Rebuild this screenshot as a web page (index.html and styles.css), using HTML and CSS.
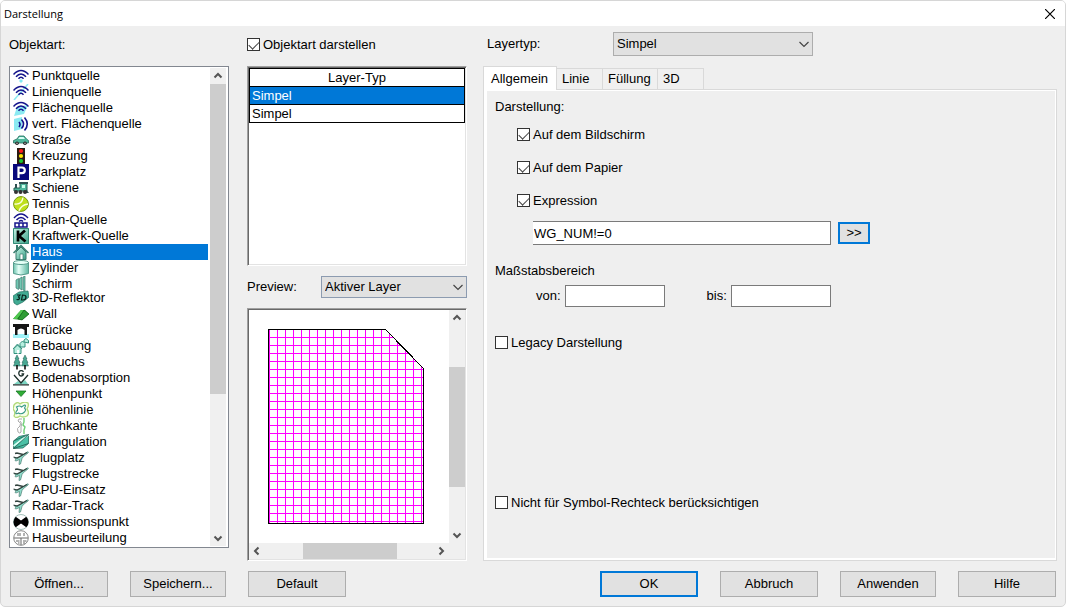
FILE: index.html
```html
<!DOCTYPE html>
<html lang="de">
<head>
<meta charset="utf-8">
<title>Darstellung</title>
<link rel="stylesheet" href="styles.css">
</head>
<body>
<svg class="defs" aria-hidden="true">
  <defs>
    <linearGradient id="mint" x1="0" y1="0" x2="1" y2="1"><stop offset="0" stop-color="#c8f5e6"/><stop offset="1" stop-color="#3aa088"/></linearGradient>
    <linearGradient id="tube" x1="0" y1="0" x2="1" y2="0"><stop offset="0" stop-color="#6cc4ae"/><stop offset=".35" stop-color="#e6fff8"/><stop offset="1" stop-color="#5fb8a2"/></linearGradient>
    <g id="waves" fill="none" stroke="#14148c" stroke-width="1.5"><path d="M.5 6.500Q8-1.500 15.500 6.500M3 8.800Q8 3 13 8.800M5.500 10.800Q8 7.500 10.500 10.800"/></g>
    <symbol id="i-punkt" viewBox="0 0 16 16"><use href="#waves"/><path d="M8 11l2 2-2 2-2-2z" fill="#7fe9f2"/></symbol>
    <symbol id="i-linie" viewBox="0 0 16 16"><path d="M1 16L15 0" stroke="#8beaf2" stroke-width="1.500"/><use href="#waves"/></symbol>
    <symbol id="i-flaeche" viewBox="0 0 16 16"><path d="M4 7l11-2-4 9-10 2z" fill="#8beaf2"/><use href="#waves"/></symbol>
    <symbol id="i-vert" viewBox="0 0 16 16"><path d="M1 3l8-2v12l-8 2z" fill="#8beaf2"/><path d="M6 6q2 2.500 0 5M8.500 3.500q4 4.500 0 9M11.500 1.500q5.500 6.500 0 13" fill="none" stroke="#14148c" stroke-width="1.600"/></symbol>
    <symbol id="i-auto" viewBox="0 0 16 16"><path d="M.5 8.500L4 7l2-3h5l2.500 3 2 1.500V11H.5z" fill="#4fb79c" stroke="#276f60" stroke-width=".8"/><path d="M5 7l1.500-2h4L12 7z" fill="#d8fff5"/><circle cx="4" cy="11.300" r="1.800" fill="#222"/><circle cx="12" cy="11.300" r="1.800" fill="#222"/><circle cx="4" cy="11.300" r=".7" fill="#ddd"/><circle cx="12" cy="11.300" r=".7" fill="#ddd"/></symbol>
    <symbol id="i-ampel" viewBox="0 0 16 16"><path d="M4 0h8v16H4z" fill="#2b1a10"/><circle cx="8" cy="3" r="2.100" fill="#ff1a1a"/><circle cx="8" cy="8" r="2.100" fill="#ffe600"/><circle cx="8" cy="13" r="2.100" fill="#19c832"/></symbol>
    <symbol id="i-park" viewBox="0 0 16 16"><path d="M0 0h16v16H0z" fill="#08087c"/><path d="M5.500 14V3.500H9a2.700 2.700 0 010 5.600H5.500" fill="none" stroke="#fff" stroke-width="2.200"/></symbol>
    <symbol id="i-lok" viewBox="0 0 16 16"><path d="M1 11V8h6V3h6l1 1v7z" fill="#4fb79c" stroke="#245f54"/><path d="M2 4h2v4H2zM6 2h9v2H6zM13 9l3 4h-3z" fill="#2d5050"/><path d="M9 5h3v3H9z" fill="#caffed"/><circle cx="3" cy="12" r="2" fill="#333"/><circle cx="7.500" cy="12" r="2" fill="#333"/><circle cx="12" cy="12" r="2" fill="#333"/></symbol>
    <symbol id="i-tennis" viewBox="0 0 16 16"><circle cx="8" cy="8" r="7.400" fill="#bfe01c" stroke="#759c10"/><path d="M1.500 8Q9 9 10 1.500M6 15Q8 9 15 8" fill="none" stroke="#fbffe0" stroke-width="1.400"/></symbol>
    <symbol id="i-bplan" viewBox="0 0 16 16"><path d="M1 6q7-8 14 0M3.500 8q4.500-5 9 0M6 9.500q2-2 4 0M2 15v-4h12v4zM6 11v4M10 11v4" fill="none" stroke="#14148c" stroke-width="1.500"/></symbol>
    <symbol id="i-kraft" viewBox="0 0 16 16"><path d="M0 0h16v16H0z" fill="url(#mint)"/><path d="M.5.5h15v15H.5z" fill="none" stroke="#338a77"/><path d="M5 2.500v11M12 2.500L6 8l6.500 5.500" fill="none" stroke="#000" stroke-width="2.700"/></symbol>
    <symbol id="i-haus" viewBox="0 0 16 16"><path d="M3 8v7.500h10V8L8 3z" fill="url(#mint)" stroke="#38796c"/><path d="M3 1h2v5H3z" fill="#38796c"/><path d="M.5 9L8 1.500 15.500 9" fill="none" stroke="#347c6c" stroke-width="1.500"/><path d="M7 10h3v5.500H7z" fill="#fff" stroke="#38796c" stroke-width=".7"/></symbol>
    <symbol id="i-zyl" viewBox="0 0 16 16"><path d="M.5 2.500v11q7.500 3 15 0v-11z" fill="url(#tube)" stroke="#579c8d"/><ellipse cx="8" cy="2.500" rx="7.500" ry="2" fill="#e5fff7" stroke="#579c8d"/></symbol>
    <symbol id="i-schirm" viewBox="0 0 16 16"><path d="M3 4l2.500-1.500v11L3 12zM6.500 2.500L9 1v13l-2.500-1.500zM10 1l2-1v15l-2-1z" fill="#72c8b4" stroke="#3c7b6e" stroke-width=".7"/></symbol>
    <symbol id="i-3d" viewBox="0 0 16 16"><path d="M0 6l6-4 9-1 1 6-6 5-6 3-3-2z" fill="#41ab93" stroke="#247061" stroke-width=".7"/><path d="M4 5h3L5.500 7l1 1q0 2-3 1.500M9.500 5l-1 5h1.500q3 0 3-3 0-2-3.500-2z" fill="none" stroke="#07211c" stroke-width="1.200"/></symbol>
    <symbol id="i-wall" viewBox="0 0 16 16"><path d="M0 13l8-9h4l4 4-7 6z" fill="#238a2c"/><path d="M0 13l8-9h3l-7 9z" fill="#51c850"/><path d="M11 4l5 4-7 6-4-1z" fill="#2f9c35" stroke="#125d1a" stroke-width=".6"/></symbol>
    <symbol id="i-bruecke" viewBox="0 0 16 16"><path d="M0 12h16v4H0z" fill="#a0f2f8"/><path d="M0 2h16v3h-2v8h-2.500V8q-3.500-3-7 0v5H2V5H0z" fill="#151515"/></symbol>
    <symbol id="i-bebau" viewBox="0 0 16 16"><path d="M1 15.500v-5L4.500 7 8 10.500v5zM7 9V5.500L9.500 3 12 5.500V9zM11 4V2l2-1.500 2.500 2V5z" fill="#b8efdf" stroke="#32917d"/><path d="M0 11l4.500-5L9 11" fill="none" stroke="#32917d"/><path d="M4 12h2v3.500H4z" fill="#fff"/></symbol>
    <symbol id="i-bewuchs" viewBox="0 0 16 16"><path d="M4 1l2 4H5l2 3.500H6L7.500 12h-7l1.500-3.500H1L3 5H2zM12 1l2 4h-1l2 3.500h-1l1.500 3.500h-7l1.500-3.500H9L11 5h-1z" fill="#4aa893" stroke="#225c50" stroke-width=".5"/><path d="M4 11v4.500M12 11v4.500" stroke="#111" stroke-width="1.600"/></symbol>
    <symbol id="i-boden" viewBox="0 0 16 16"><path d="M1 14l4-3 3 2 4-3 3 4z" fill="#7bd5c2"/><path d="M10.500 1.800Q9.500.5 8 .7 5.700 1 5.800 3.500 6 6 8.300 6q2 0 2.300-2H8.500M1 5l7 8 7-8M0 14.800h16" fill="none" stroke="#1d2f2b" stroke-width="1.300"/></symbol>
    <symbol id="i-hpunkt" viewBox="0 0 16 16"><path d="M3 5h10l-5 5.500z" fill="#30ad35" stroke="#167325" stroke-width=".8"/></symbol>
    <symbol id="i-hlinie" viewBox="0 0 16 16"><path d="M1 3Q4-1 7 2q4-3 8-1 1 3-1 6 3 4 0 7-4 2-7 0-4 3-6 0 2-4-1-7z" fill="#f7ffe8" stroke="#b1d978" stroke-width="1.300"/><path d="M3.500 5q3-2 5 0l3-2q2 0 0 3 2 2 0 4-3 3-6 1-4 2-2-2 2-1 0-4z" fill="#fff" stroke="#3a9a88" stroke-width="1.100"/></symbol>
    <symbol id="i-bruch" viewBox="0 0 16 16"><path d="M9 1Q5 0 5 3q4 2 2 5-4 2-2 6 2 2 3 0V9M7 3q3 2 1 6" fill="none" stroke="#aaa"/><path d="M11 0v4l-1 3 2 2-1 3v4" fill="none" stroke="#6fd077" stroke-width="1.400"/></symbol>
    <symbol id="i-tri" viewBox="0 0 16 16"><path d="M.5 7L6 2.500 15.500.5v9L10 14l-9.500.5z" fill="#4ac0a5" stroke="#276d60" stroke-width=".8"/><path d="M15.500.5L.5 12" stroke="#d9fff3" stroke-width="1.600"/><path d="M.5 7l15-6.500L.5 14.500l15-5" fill="none" stroke="#205d51" stroke-width=".8"/></symbol>
    <symbol id="i-flug" viewBox="0 0 16 16"><path d="M1 7.500l4 .5L14.500 1.800q1.500 0 .5 1.200L10.500 6.500l-1.500 2L7.500 14 6 14.500l.5-5L3 11l-1-.5 1-1.500z" fill="#8fdccb" stroke="#4a7d71" stroke-width=".7"/><path d="M2 3.500l2-.5 6 1.500M.5 7l3.500 1 10-5.500" fill="none" stroke="#33443f" stroke-width="1.300"/></symbol>
    <symbol id="i-immi" viewBox="0 0 16 16"><circle cx="8" cy="8" r="7.500" fill="#fff" stroke="#7ca69d" stroke-width=".7"/><path d="M2.700 2.700L8 6.500l5.300-3.800q4.500 5.300 0 10.600L8 9.500l-5.300 3.800q-4.500-5.300 0-10.600z" fill="#000"/></symbol>
    <symbol id="i-hausb" viewBox="0 0 16 16"><circle cx="8" cy="8" r="7.300" fill="#fff" stroke="#888"/><path d="M1 8h14M8 8v7M5 3v3M7 3v3M11 3v3M3 11h3.500M10 11h3.500M5 13h1.500M10 13h2" stroke="#666"/></symbol>
    <symbol id="chev" viewBox="0 0 10 10"><path d="M1.500 6.500L5 3l3.500 3.500" fill="none" stroke="#555" stroke-width="2"/></symbol>
    <symbol id="chev-thin" viewBox="0 0 10 10"><path d="M.5 7L5 2.500 9.500 7" fill="none" stroke="#444" stroke-width="1.200"/></symbol>
    <pattern id="hatch" x="4" y="3" width="8" height="8" patternUnits="userSpaceOnUse"><path d="M0 0h8v1H1v7H0z" fill="#f0f"/></pattern>
  </defs>
</svg>

<div class="window">
  <header class="titlebar">
    <h1 class="title">Darstellung</h1>
    <button class="close" type="button" aria-label="Schließen"><svg width="10" height="10" viewBox="0 0 10 10"><path d="M0 0l10 10M10 0L0 10" stroke="#000" stroke-width="1.200"/></svg></button>
  </header>

  <main class="columns">
    <section class="col col-types">
      <div class="head" id="types-label">Objektart:</div>
      <div class="listbox">
        <ul class="items" role="listbox" aria-labelledby="types-label">
          <li class="item" role="option"><svg class="ico"><use href="#i-punkt"/></svg><span class="name">Punktquelle</span></li>
          <li class="item" role="option"><svg class="ico"><use href="#i-linie"/></svg><span class="name">Linienquelle</span></li>
          <li class="item" role="option"><svg class="ico"><use href="#i-flaeche"/></svg><span class="name">Flächenquelle</span></li>
          <li class="item" role="option"><svg class="ico"><use href="#i-vert"/></svg><span class="name">vert. Flächenquelle</span></li>
          <li class="item" role="option"><svg class="ico"><use href="#i-auto"/></svg><span class="name">Straße</span></li>
          <li class="item" role="option"><svg class="ico"><use href="#i-ampel"/></svg><span class="name">Kreuzung</span></li>
          <li class="item" role="option"><svg class="ico"><use href="#i-park"/></svg><span class="name">Parkplatz</span></li>
          <li class="item" role="option"><svg class="ico"><use href="#i-lok"/></svg><span class="name">Schiene</span></li>
          <li class="item" role="option"><svg class="ico"><use href="#i-tennis"/></svg><span class="name">Tennis</span></li>
          <li class="item" role="option"><svg class="ico"><use href="#i-bplan"/></svg><span class="name">Bplan-Quelle</span></li>
          <li class="item" role="option"><svg class="ico"><use href="#i-kraft"/></svg><span class="name">Kraftwerk-Quelle</span></li>
          <li class="item selected" role="option" aria-selected="true"><svg class="ico"><use href="#i-haus"/></svg><span class="name">Haus</span></li>
          <li class="item" role="option"><svg class="ico"><use href="#i-zyl"/></svg><span class="name">Zylinder</span></li>
          <li class="item short" role="option"><svg class="ico"><use href="#i-schirm"/></svg><span class="name">Schirm</span></li>
          <li class="item" role="option"><svg class="ico"><use href="#i-3d"/></svg><span class="name">3D-Reflektor</span></li>
          <li class="item" role="option"><svg class="ico"><use href="#i-wall"/></svg><span class="name">Wall</span></li>
          <li class="item" role="option"><svg class="ico"><use href="#i-bruecke"/></svg><span class="name">Brücke</span></li>
          <li class="item" role="option"><svg class="ico"><use href="#i-bebau"/></svg><span class="name">Bebauung</span></li>
          <li class="item" role="option"><svg class="ico"><use href="#i-bewuchs"/></svg><span class="name">Bewuchs</span></li>
          <li class="item" role="option"><svg class="ico"><use href="#i-boden"/></svg><span class="name">Bodenabsorption</span></li>
          <li class="item" role="option"><svg class="ico"><use href="#i-hpunkt"/></svg><span class="name">Höhenpunkt</span></li>
          <li class="item" role="option"><svg class="ico"><use href="#i-hlinie"/></svg><span class="name">Höhenlinie</span></li>
          <li class="item" role="option"><svg class="ico"><use href="#i-bruch"/></svg><span class="name">Bruchkante</span></li>
          <li class="item" role="option"><svg class="ico"><use href="#i-tri"/></svg><span class="name">Triangulation</span></li>
          <li class="item" role="option"><svg class="ico"><use href="#i-flug"/></svg><span class="name">Flugplatz</span></li>
          <li class="item" role="option"><svg class="ico"><use href="#i-flug"/></svg><span class="name">Flugstrecke</span></li>
          <li class="item" role="option"><svg class="ico"><use href="#i-flug"/></svg><span class="name">APU-Einsatz</span></li>
          <li class="item" role="option"><svg class="ico"><use href="#i-flug"/></svg><span class="name">Radar-Track</span></li>
          <li class="item" role="option"><svg class="ico"><use href="#i-immi"/></svg><span class="name">Immissionspunkt</span></li>
          <li class="item" role="option"><svg class="ico"><use href="#i-hausb"/></svg><span class="name">Hausbeurteilung</span></li>
        </ul>
        <div class="scroll scroll-v" aria-hidden="true">
          <svg class="arrow up"><use href="#chev"/></svg>
          <div class="track track-list"><div class="thumb"></div></div>
          <svg class="arrow down"><use href="#chev"/></svg>
        </div>
      </div>
    </section>

    <section class="col col-layers">
      <div class="head"><label class="check"><input type="checkbox" checked>Objektart darstellen</label></div>
      <div class="sunken layers">
        <table class="layer-table">
          <thead><tr><th>Layer-Typ</th></tr></thead>
          <tbody>
            <tr class="active"><td>Simpel</td></tr>
            <tr><td>Simpel</td></tr>
          </tbody>
        </table>
      </div>
      <div class="preview-row">
        <label for="preview">Preview:</label>
        <div class="select preview-select"><select id="preview"><option>Aktiver Layer</option></select><svg class="arrow down"><use href="#chev-thin"/></svg></div>
      </div>
      <div class="sunken preview">
        <svg class="canvas" viewBox="0 0 200 233" role="img" aria-label="Vorschau" shape-rendering="crispEdges">
          <path d="M19.500 19.500h117l38 39v155h-155z" fill="url(#hatch)" stroke="#000"/>
        </svg>
        <div class="scroll scroll-v" aria-hidden="true">
          <svg class="arrow up"><use href="#chev"/></svg>
          <div class="track track-mid"><div class="thumb"></div></div>
          <svg class="arrow down"><use href="#chev"/></svg>
        </div>
        <div class="scroll scroll-h" aria-hidden="true">
          <svg class="arrow left"><use href="#chev"/></svg>
          <div class="track track-wide"><div class="thumb"></div></div>
          <svg class="arrow right"><use href="#chev"/></svg>
        </div>
        <div class="scroll"></div>
      </div>
    </section>

    <section class="col col-settings">
      <div class="head type-row">
        <label class="type-label" for="layertyp">Layertyp:</label>
        <div class="select type-select"><select id="layertyp"><option>Simpel</option></select><svg class="arrow down"><use href="#chev-thin"/></svg></div>
      </div>
      <div class="tabs" role="tablist">
        <button class="tab current" type="button" role="tab" aria-selected="true">Allgemein</button>
        <button class="tab" type="button" role="tab">Linie</button>
        <button class="tab tab-fill" type="button" role="tab">Füllung</button>
        <button class="tab" type="button" role="tab">3D</button>
      </div>
      <div class="panel" role="tabpanel">
        <div class="caption">Darstellung:</div>
        <div class="options">
          <label class="check"><input type="checkbox" checked>Auf dem Bildschirm</label>
          <label class="check"><input type="checkbox" checked>Auf dem Papier</label>
          <label class="check"><input type="checkbox" checked>Expression</label>
        </div>
        <div class="expr-row">
          <input class="field expr" type="text" value="WG_NUM!=0" aria-label="Expression">
          <button class="btn focus more" type="button">&gt;&gt;</button>
        </div>
        <div class="caption">Maßstabsbereich</div>
        <div class="range-row">
          <label for="von">von:</label><input class="field" id="von" type="text">
          <label class="to" for="bis">bis:</label><input class="field" id="bis" type="text">
        </div>
        <label class="check"><input type="checkbox">Legacy Darstellung</label>
        <label class="check last"><input type="checkbox">Nicht für Symbol-Rechteck berücksichtigen</label>
      </div>
    </section>
  </main>

  <footer class="actions">
    <button class="btn" type="button">Öffnen...</button>
    <button class="btn narrow" type="button">Speichern...</button>
    <button class="btn" type="button">Default</button>
    <span class="space"></span>
    <button class="btn focus" type="button">OK</button>
    <button class="btn" type="button">Abbruch</button>
    <button class="btn narrow" type="button">Anwenden</button>
    <button class="btn" type="button">Hilfe</button>
  </footer>
</div>
</body>
</html>
```
FILE: styles.css
```css
* { box-sizing: border-box; }

body {
  margin: 0;
  background: #fff;
  color: #000;
  font: 13px/16px "Liberation Sans", Arial, sans-serif;
}

button, input, select { font: inherit; color: inherit; margin: 0; }
.defs { position: absolute; width: 0; height: 0; }

.window {
  display: flex;
  flex-direction: column;
  min-height: 100vh;
  border: 1px solid #d6d6d6;
  border-radius: 5px;
  background: #efefef;
  overflow: hidden;
}

.titlebar {
  display: flex;
  align-items: center;
  justify-content: space-between;
  height: 25px;
  padding: 0 8px 0 3px;
  background: #fff;
}
.title { margin: 0; font: 11px/16px "Open Sans", "Noto Sans", sans-serif; }
.close { display: flex; padding: 2px; border: 0; background: none; }

.columns {
  flex: 1;
  display: grid;
  grid-template-columns: 220px 220px 1fr;
  padding: 0 8px;
}
.col { display: flex; flex-direction: column; min-width: 0; }
.col-types { padding-bottom: 13px; }
.col-layers { margin: 0 -18px 0 18px; }
.col-settings { margin-left: 34px; }
.head { display: flex; align-items: center; height: 40px; padding-bottom: 2px; }

/* Object types */
.listbox {
  flex: 1;
  display: flex;
  justify-content: space-between;
  padding: 1px 2px 1px 3px;
  border: 1px solid #828790;
  background: #fff;
}
.items { flex: 1; margin: 0; padding: 0; list-style: none; }
.item { display: flex; height: 16px; padding-right: 2px; }
.item.short { height: 14px; }
.ico { flex: none; width: 16px; height: 16px; }
.name { flex: 1; height: 16px; margin-left: 2px; padding-left: 1px; white-space: nowrap; }
.selected .name { background: #0078d7; color: #fff; }

/* Scrollbars */
.scroll { display: flex; background: #f0f0f0; }
.scroll-v { flex-direction: column; width: 16px; }
.scroll-h { height: 16px; }
.arrow { flex: none; width: 16px; height: 16px; padding: 3px; }
.down { transform: rotate(180deg); }
.left { transform: rotate(-90deg); }
.right { transform: rotate(90deg); }
.track { flex: 1; display: grid; }
.thumb { background: #cdcdcd; }
.track-list { grid-template-rows: 310fr 136fr; }
.track-mid { grid-template-rows: 41fr 120fr 40fr; }
.track-mid .thumb { grid-row: 2; }
.track-wide { grid-template-columns: 38fr 94fr 36fr; }
.track-wide .thumb { grid-column: 2; }

.sunken {
  border: 1px solid;
  border-color: #a0a0a0 #fff #fff #a0a0a0;
  box-shadow: inset 1px 1px #696969, inset -1px -1px #e3e3e3;
  padding: 1px;
  background: #fff;
}

/* Layers */
.layers { flex: 1; }
.layer-table { width: 100%; border-collapse: collapse; }
.layer-table th, .layer-table td { height: 18px; padding: 0 2px; border: 1px solid #000; font-weight: normal; text-align: left; }
.layer-table th { text-align: center; }
.active td { background: #0078d7; color: #fff; }

.preview-row { display: flex; align-items: center; justify-content: space-between; margin: 10px 0; }
.preview-select { width: 146px; height: 22px; }
.preview { display: grid; grid-template-columns: 1fr 16px; grid-template-rows: auto 16px; padding: 1px; }
.canvas { display: block; width: 100%; }

.select { position: relative; }
.select select {
  appearance: none;
  width: 100%;
  height: 100%;
  padding: 0 20px 0 3px;
  border: 1px solid #adadad;
  border-radius: 0;
  background: #e1e1e1;
}
.preview-select select { border-color: #8c9bb0; }
.select .arrow { position: absolute; right: 1px; top: calc(50% - 8px); pointer-events: none; }

/* Settings */
.type-row { padding: 0 0 4px 4px; }
.type-label { width: 126px; }
.type-select { width: 200px; height: 24px; }

.tabs { display: flex; align-items: flex-end; height: 24px; margin-bottom: -1px; z-index: 1; }
.tab {
  height: 22px;
  min-width: 46px;
  padding: 0 6px 0 5px;
  border: 1px solid #d9d9d9;
  border-left: 0;
  background: #f0f0f0;
  text-align: left;
}
.tab-fill { min-width: 55px; }
.tab.current { min-width: 74px; height: 24px; padding: 0 7px; border-left: 1px solid #d9d9d9; border-bottom: 0; background: #fff; }

.panel {
  flex: 1;
  display: flex;
  flex-direction: column;
  align-items: flex-start;
  padding: 9px 9px 49px 11px;
  border: 1px solid #d9d9d9;
  box-shadow: inset 3px 1px #fff, inset -1px -2px #fff;
}
.check { display: flex; align-items: flex-start; gap: 3px; }
.check input {
  appearance: none;
  display: grid;
  place-items: center;
  width: 13px;
  height: 13px;
  margin-top: 1px;
  border: 1px solid #333;
  background: #fff;
}
.check input:checked::before {
  content: "";
  width: 9px;
  height: 5px;
  border: solid #444;
  border-width: 0 0 1px 1px;
  transform: translateY(-1px) rotate(-45deg);
}
.options { display: flex; flex-direction: column; gap: 17px; padding: 12px 0 12px 22px; }
.expr-row { display: flex; align-items: center; gap: 7px; padding: 0 0 18px 38px; }
.field { width: 100px; height: 22px; padding: 0 2px; border: 1px solid #7a7a7a; background: #fff; }
.expr { width: 298px; height: 24px; padding: 0 1px; border-left: 0; }
.range-row { display: flex; align-items: center; gap: 4px; padding: 6px 0 28px 41px; }
.to { margin-left: 38px; }
.last { margin-top: auto; }

.btn { min-width: 98px; height: 26px; padding: 0 8px; border: 1px solid #adadad; background: #e1e1e1; }
.focus { border: 2px solid #0078d7; }
.narrow { min-width: 96px; }
.more { min-width: 32px; height: 22px; padding: 0; }

.actions { display: flex; gap: 22px; padding: 10px 9px 9px; }
.space { flex: 1; }
```
